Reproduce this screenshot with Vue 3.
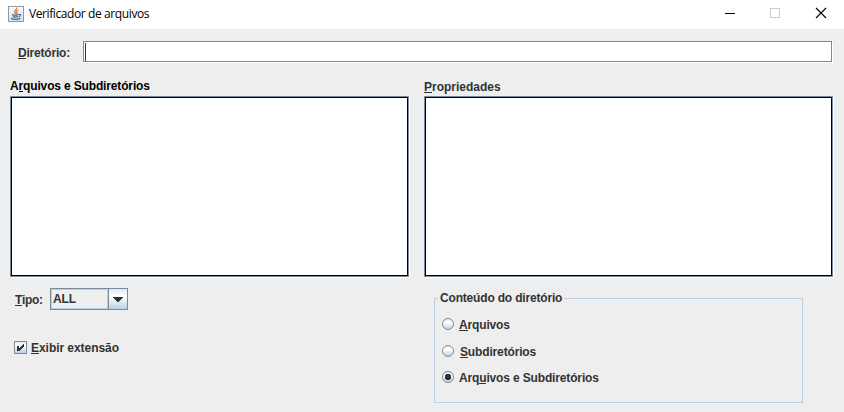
<script setup>
import { ref } from 'vue'

const directory = ref('')
const showExtension = ref(true)
const selected = ref(2)
const options = [
  { before: '', key: 'A', after: 'rquivos' },
  { before: '', key: 'S', after: 'ubdiretórios' },
  { before: 'Arq', key: 'u', after: 'ivos e Subdiretórios' },
]
</script>

<template>
  <div class="window">
    <header class="titlebar">
      <svg class="logo" width="16" height="16" viewBox="0 0 16 16">
        <defs>
          <linearGradient id="logoBg" x1="0" y1="0" x2="0" y2="1">
            <stop offset="0" stop-color="#ffffff" />
            <stop offset="1" stop-color="#d5dde6" />
          </linearGradient>
        </defs>
        <rect x=".5" y=".5" width="15" height="15" fill="url(#logoBg)" stroke="#8b9aaa" />
        <path d="M8.7 1.5C9.5 3.5 5.6 4.3 6.7 6.2L7.8 8M10.3 4C8.2 4.8 7.9 5.6 8.8 6.5Q9.2 7.2 8.5 8" fill="none" stroke="#e8731e" stroke-width="1.3" />
        <path d="M4 8.6Q7 9.8 10.5 8.6M4.8 10.6Q7.5 11.5 10 10.6M3 12.4Q7.5 14.2 12.3 12.4M10.7 8.5Q13.3 8.2 12.3 9.8Q11.8 10.6 10.8 10.9" fill="none" stroke="#396f9e" stroke-width="1.2" />
      </svg>
      <span class="title">Verificador de arquivos</span>
      <svg class="controls" width="102" height="12" viewBox="0 0 102 12" shape-rendering="crispEdges">
        <rect x="0" y="6" width="10" height="1" fill="#000" />
        <rect x="45.5" y="1.5" width="9" height="9" fill="none" stroke="#ccc" />
        <path d="M91 1L101 11M101 1L91 11" stroke="#000" stroke-width="1.1" shape-rendering="auto" />
      </svg>
    </header>

    <div class="directory">
      <label for="dir"><u>D</u>iretório:</label>
      <div class="field"><i class="caret"></i><input id="dir" v-model="directory" /></div>
    </div>

    <main class="columns">
      <section class="left">
        <h2 class="dark">A<u>r</u>quivos e Subdiretórios</h2>
        <div class="list"></div>
        <div class="type">
          <span class="type-label"><u>T</u>ipo:</span>
          <div class="combo">
            <span class="value">ALL</span>
            <span class="arrow">
              <svg width="10" height="5" viewBox="0 0 10 5" shape-rendering="crispEdges"><path d="M0 0H10V1H9V2H8V3H7V4H6V5H4V4H3V3H2V2H1V1H0Z" fill="#333" /></svg>
            </span>
          </div>
        </div>
        <div class="check" @click="showExtension = !showExtension">
          <span class="box">
            <svg v-if="showExtension" width="7" height="7" viewBox="0 0 7 7" shape-rendering="crispEdges"><path d="M0 2H2V4H3V3H4V2H5V1H6V0H7V3H6V4H5V5H4V6H3V7H0Z" fill="#333" /></svg>
          </span>
          <span><u>E</u>xibir extensão</span>
        </div>
      </section>

      <section class="right">
        <h2 class="props"><u>P</u>ropriedades</h2>
        <div class="list"></div>
        <fieldset>
          <legend>Conteúdo do diretório</legend>
          <div v-for="(o, i) in options" :key="i" class="option" @click="selected = i">
            <svg width="12" height="12" viewBox="0 0 12 12">
              <defs>
                <linearGradient :id="'radio' + i" x1="0" y1="0" x2="0" y2="1">
                  <stop offset="0" stop-color="#dde8f3" />
                  <stop offset=".35" stop-color="#fff" />
                  <stop offset="1" stop-color="#b8cfe5" />
                </linearGradient>
              </defs>
              <circle cx="6" cy="6" r="5.5" :fill="`url(#radio${i})`" stroke="#7a8a99" />
              <path v-if="selected === i" d="M4 3H8V4H9V8H8V9H4V8H3V4H4Z" fill="#333" shape-rendering="crispEdges" />
            </svg>
            <span>{{ o.before }}<u>{{ o.key }}</u>{{ o.after }}</span>
          </div>
        </fieldset>
      </section>
    </main>
  </div>
</template>

<style>
body { margin: 0; background: #eee; }
</style>

<style scoped>
* { box-sizing: border-box; }
.window {
  width: 844px;
  height: 412px;
  background: #eee;
  color: #333;
  font: bold 12px/14px "Liberation Sans", Arial, sans-serif;
  letter-spacing: -0.15px;
  white-space: nowrap;
  overflow: hidden;
}
u { text-decoration: none; box-shadow: 0 1px 0 #333; display: inline-block; height: 12px; }
.titlebar {
  height: 29px;
  background: #fff;
  display: flex;
  padding: 6px 17px 0 8px;
}
.title {
  font: 400 12px/16px "Open Sans", "Noto Sans", sans-serif;
  color: #000;
  margin-left: 5px;
  letter-spacing: -0.4px;
}
.controls { margin: 1px 0 0 auto; }
.directory { display: flex; padding: 12px 12px 0 18px; height: 50px; }
.directory label { width: 65px; padding-top: 5px; letter-spacing: -0.2px; }
.field {
  width: 749px;
  height: 21px;
  background: #fff;
  border: 1px solid #7a8a99;
  box-shadow: 1px 1px 0 #fff;
  display: flex;
  padding: 1px;
}
.caret { width: 1px; height: 18px; background: #333; }
.field input { border: 0; outline: 0; padding: 0; flex: 1; min-width: 0; background: transparent; }
.columns { display: grid; grid-template-columns: 399px 409px; column-gap: 15px; padding-left: 10px; }
h2 { font: inherit; margin: 0; height: 17px; }
.dark { color: #000; }
.dark u { box-shadow: 0 1px 0 #000; }
.props { padding-top: 1px; letter-spacing: 0; }
.list {
  height: 181px;
  background: #fff;
  border: 1px solid #7a8a99;
  box-shadow: inset 0 0 0 1px #000, 1px 1px 0 #fff;
}
.type { display: flex; margin: 11px 0 0 5px; height: 22px; }
.type-label { width: 35px; padding-top: 5px; letter-spacing: -0.35px; }
.combo { width: 78px; border: 1px solid #7a8a99; display: flex; }
.value { flex: 1; border: 1px solid #b8cfe5; padding: 2px 0 0 1px; }
.arrow {
  width: 19px;
  border-left: 1px solid #7a8a99;
  background: linear-gradient(#dde8f3, #fff 35%, #fff 40%, #b8cfe5);
  display: flex;
  justify-content: center;
  padding-top: 8px;
}
.check { display: flex; margin: 31px 0 0 4px; height: 14px; letter-spacing: -0.05px; }
.box {
  width: 13px;
  height: 13px;
  border: 1px solid #7a8a99;
  background: linear-gradient(#dde8f3, #fff 35%, #b8cfe5);
  margin-right: 4px;
  padding: 2px;
  display: flex;
}
.box svg { flex: none; }
fieldset {
  width: 369px;
  height: 112px;
  margin: 14px 0 0 10px;
  padding: 13px 7px 0;
  border: 1px solid #b8cfe5;
  min-width: 0;
}
legend { padding: 0 2px; margin-left: -4px; height: 14px; letter-spacing: -0.18px; }
.option { display: flex; height: 14px; margin-bottom: 13px; }
.option:nth-of-type(2) { margin-bottom: 12px; }
.option:nth-of-type(2) svg { margin-right: 6px; }
.option svg { margin-right: 5px; }
</style>
